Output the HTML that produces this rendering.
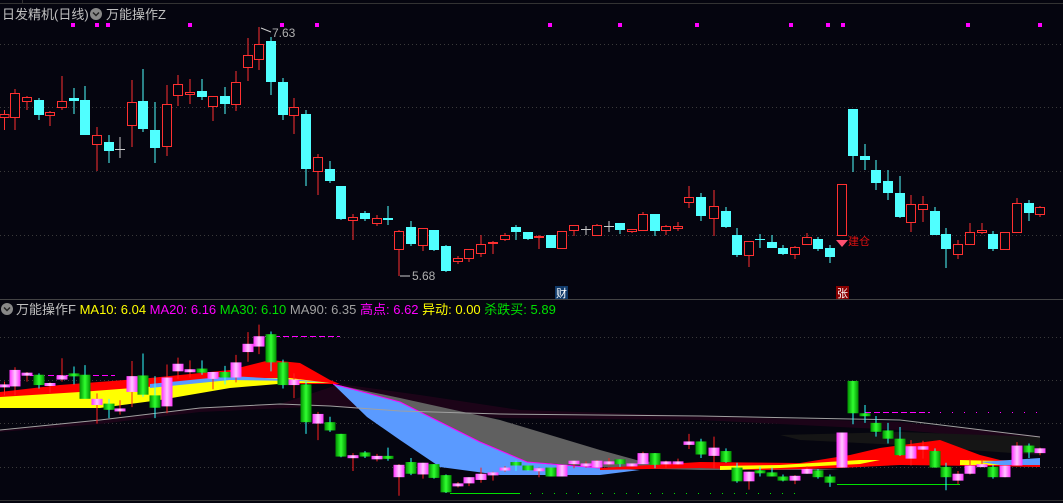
<!DOCTYPE html>
<html><head><meta charset="utf-8"><style>
html,body{margin:0;padding:0;background:#05050f;width:1063px;height:503px;overflow:hidden}
svg{display:block}
text{font-family:"Liberation Sans","Noto Sans CJK SC",sans-serif}
</style></head><body>
<svg id="s" width="1063" height="503" xmlns="http://www.w3.org/2000/svg">
<defs>
<linearGradient id="pk" x1="0" x2="1"><stop offset="0" stop-color="#ff30ff"/><stop offset="0.5" stop-color="#ffc8ff"/><stop offset="1" stop-color="#ff30ff"/></linearGradient>
<linearGradient id="gr" x1="0" x2="1"><stop offset="0" stop-color="#009000"/><stop offset="0.5" stop-color="#30ff30"/><stop offset="1" stop-color="#009000"/></linearGradient>
</defs>
<rect width="1063" height="503" fill="#05050f"/>
<line x1="0" y1="3.5" x2="1063" y2="3.5" stroke="#333"/>
<line x1="22.5" y1="0" x2="22.5" y2="4" stroke="#333"/>
<g stroke="#3a3a3a" stroke-dasharray="1,3">
<line x1="0" y1="44.5" x2="1063" y2="44.5"/><line x1="0" y1="107.5" x2="1063" y2="107.5"/>
<line x1="0" y1="171.5" x2="1063" y2="171.5"/><line x1="0" y1="235.5" x2="1063" y2="235.5"/>
<line x1="0" y1="337.5" x2="1063" y2="337.5"/><line x1="0" y1="380.5" x2="1063" y2="380.5"/>
<line x1="0" y1="423.5" x2="1063" y2="423.5"/><line x1="0" y1="467.5" x2="1063" y2="467.5"/>
</g>
<line x1="0" y1="299.5" x2="1063" y2="299.5" stroke="#444"/>
<line x1="0" y1="500.5" x2="1063" y2="500.5" stroke="#333"/>
<text x="2" y="19" font-size="13" fill="#c0c0c0">日发精机(日线)</text>
<circle cx="96" cy="14" r="6" fill="#888"/><path d="M93 12.5l3 3 3-3" stroke="#222" stroke-width="1.5" fill="none"/>
<text x="106" y="19" font-size="13" fill="#c0c0c0">万能操作Z</text>
<circle cx="7" cy="309" r="6" fill="#888"/><path d="M4 307.5l3 3 3-3" stroke="#222" stroke-width="1.5" fill="none"/>
<text y="314" font-size="13"><tspan x="16" fill="#c0c0c0">万能操作F </tspan><tspan fill="#ffff00">MA10: 6.04 </tspan><tspan fill="#ff00ff">MA20: 6.16 </tspan><tspan fill="#00e000">MA30: 6.10 </tspan><tspan fill="#a0a0a0">MA90: 6.35 </tspan><tspan fill="#ff00ff">高点: 6.62 </tspan><tspan fill="#ffff00">异动: 0.00 </tspan><tspan fill="#00e000">杀跌买: 5.89</tspan></text>
<!-- bands -->
<path d="M0,430 L100,420 L200,408 L280,404 L340,384 L420,395 L520,410 L700,416 L900,422 L1040,436 L1040,442 L900,430 L700,420 L500,418 L400,414 L330,406 L200,412 L100,424 L0,432Z" fill="#1c0418"/>
<path d="M0,392 L60,385 L150,378 L230,370 L270,360 L300,363 L330,380 L340,384 L300,384 L250,384 L180,390 L100,400 L0,405Z" fill="#ff0000"/>
<path d="M0,397 L80,392 L160,386 L230,378 L290,378 L330,383 L290,383 L230,388 L160,400 L100,408 L0,408Z" fill="#ffff00"/>
<path d="M150,384 L230,376 L300,380 L330,383 L300,381 L230,380 L150,388Z" fill="#5a9aff"/>
<path d="M333,384 L400,398 L500,420 L600,450 L640,461 L700,466 L800,468 L840,470 L800,470 L700,470 L620,468 L527,462 L480,442 L400,402Z" fill="#606060"/>
<path d="M333,384 L400,402 L480,442 L527,462 L600,468 L640,470 L600,475 L500,475 L440,467 L400,440 L367,417Z" fill="#5a9aff"/>
<path d="M333,384 L400,402 L480,442 L527,462 L600,468" stroke="#ff00ff" fill="none"/>
<path d="M900,432 L1040,437 L1040,455 L900,445 L800,440 L780,435Z" fill="#151515"/>
<path d="M600,468 L700,462 L800,463 L850,455 L880,448 L940,440 L980,455 L1000,460 L1040,462 L1040,467 L980,466 L900,465 L840,468 L760,470 L700,468 L600,470Z" fill="#ff0000"/>
<path d="M720,466 L780,465 L860,460 L880,460 L860,464 L780,468 L720,470Z" fill="#ffff00"/>
<path d="M960,460 L1040,462 L1040,465 L960,465Z" fill="#ffff00"/>
<path d="M980,462 L1040,458 L1040,465 L1000,465Z" fill="#5a9aff"/>
<polyline points="0,430 100,420 200,408 280,404 330,406 400,411 500,414 700,416 900,420 1040,437" stroke="#a0a0a0" fill="none"/>
<g stroke="#ff00ff" stroke-dasharray="6,3"><line x1="265" y1="336.5" x2="340" y2="336.5"/><line x1="865" y1="412.5" x2="930" y2="412.5"/><line x1="940" y1="412.5" x2="1040" y2="412.5" stroke-dasharray="1,11"/><line x1="30" y1="375.5" x2="115" y2="375.5"/></g>
<g stroke="#00e000"><line x1="450" y1="493.5" x2="520" y2="493.5"/><line x1="837" y1="484.5" x2="960" y2="484.5"/><line x1="530" y1="493.5" x2="800" y2="493.5" stroke-dasharray="1,11"/></g>
<g id="c"></g>
<g fill="#ff00ff"><rect x="71" y="23" width="4" height="4"/><rect x="95" y="23" width="4" height="4"/><rect x="106" y="23" width="4" height="4"/><rect x="188" y="23" width="4" height="4"/><rect x="280" y="23" width="4" height="4"/><rect x="315" y="23" width="4" height="4"/><rect x="548" y="23" width="4" height="4"/><rect x="618" y="23" width="4" height="4"/><rect x="695" y="23" width="4" height="4"/><rect x="789" y="23" width="4" height="4"/><rect x="826" y="23" width="4" height="4"/><rect x="841" y="23" width="4" height="4"/><rect x="966" y="23" width="4" height="4"/><rect x="1038" y="23" width="4" height="4"/></g>
<text x="272" y="37" font-size="12" fill="#b0b0b0">7.63</text><path d="M261 28l10 4" stroke="#ccc"/>
<text x="412" y="280" font-size="12" fill="#b0b0b0">5.68</text><path d="M400 276h10" stroke="#ccc"/>
<text x="848" y="245" font-size="11" fill="#e01010">建仓</text><path d="M836 240h12l-6 7z" fill="#ff5070"/>
<rect x="555" y="286" width="13" height="13" fill="#103a6a"/><text x="556" y="297" font-size="11" fill="#fff">财</text>
<rect x="836" y="286" width="13" height="13" fill="#800"/><text x="837" y="297" font-size="11" fill="#fff">张</text>
</svg>
<script>
var D=[[4.5,110,114,117,130,'r'],[15,89,93,117,130,'r'],[27,96,97,101,110,'r'],[39,98,100,115,120,'c'],[50,111,112,115,126,'r'],[62,76,101,107,110,'r'],[74,88,98,101,114,'c'],[85,86,100,135,135,'c'],[97,127,135,144,171,'r'],[109,135,142,151,163,'c'],[120,137,149,149,158,'w'],[132,80,102,125,147,'r'],[143,69,101,129,132,'c'],[155,102,130,148,163,'c'],[167,85,104,146,156,'r'],[178,75,84,95,106,'r'],[190,79,92,94,104,'r'],[202,79,91,97,100,'c'],[213,99,96,106,121,'r'],[225,87,96,104,114,'c'],[236,71,82,104,111,'r'],[248,38,55,67,81,'r'],[259,27,44,59,70,'r'],[271,37,41,82,95,'c'],[283,78,82,115,120,'c'],[294,98,107,115,134,'r'],[306,110,114,169,186,'c'],[318,154,157,171,195,'r'],[330,161,169,181,183,'c'],[341,186,186,219,220,'c'],[353,214,217,220,240,'r'],[365,211,213,219,221,'c'],[377,215,218,223,226,'r'],[388,206,218,220,225,'c'],[399,230,231,249,276,'r'],[411,221,227,244,246,'c'],[423,228,228,245,251,'r'],[434,230,230,250,251,'c'],[446,245,246,271,272,'c'],[458,256,258,261,264,'r'],[469,249,249,258,262,'r'],[481,235,244,253,257,'r'],[493,241,242,243,254,'r'],[505,233,235,239,241,'r'],[516,225,227,232,240,'c'],[528,232,232,239,240,'c'],[539,235,236,237,249,'r'],[551,235,235,248,248,'c'],[562,231,231,248,248,'r'],[574,225,225,230,236,'r'],[586,226,229,229,235,'w'],[597,224,225,235,235,'r'],[609,221,226,226,232,'w'],[620,223,223,230,234,'c'],[632,229,229,231,233,'r'],[643,212,214,230,230,'r'],[655,214,214,231,236,'c'],[666,225,226,230,235,'r'],[678,222,226,228,231,'r'],[689,186,197,202,208,'r'],[701,193,197,216,221,'c'],[714,190,206,218,236,'r'],[726,207,211,227,228,'c'],[737,228,235,255,257,'c'],[749,241,241,255,267,'r'],[760,234,239,239,248,'x'],[772,235,242,248,248,'c'],[783,245,248,254,255,'c'],[795,246,247,254,259,'r'],[807,233,237,244,244,'r'],[818,237,239,249,251,'c'],[830,245,248,257,263,'c'],[842,184,184,235,235,'r'],[853,109,109,156,172,'c'],[865,144,156,160,170,'c'],[876,160,170,183,190,'c'],[888,170,181,193,200,'c'],[900,176,193,217,218,'c'],[911,195,204,222,232,'r'],[923,196,204,209,222,'r'],[935,207,211,235,235,'c'],[946,228,234,249,268,'c'],[958,240,244,254,259,'r'],[970,223,232,244,245,'r'],[982,223,230,232,234,'r'],[993,231,234,249,251,'c'],[1005,232,232,249,249,'r'],[1017,198,203,232,232,'r'],[1029,200,203,213,221,'c'],[1040,206,207,214,217,'r']];
var h='',b=function(y){return 306+0.6875*y};
D.forEach(function(d){var x=d[0],H=d[1],T=d[2],B=d[3],L=d[4],t=d[5];
var col=t=='r'?'#ff3030':(t=='w'?'#ccc':'#50ffff');
h+='<line x1="'+x+'" y1="'+H+'" x2="'+x+'" y2="'+L+'" stroke="'+col+'"/>';
if(t=='w'||t=='x'){h+='<line x1="'+(x-5)+'" y1="'+T+'.5" x2="'+(x+5)+'" y2="'+T+'.5" stroke="'+col+'"/>';}
else if(t=='r'){h+='<rect x="'+(x-4.5)+'" y="'+(T+0.5)+'" width="9" height="'+Math.max(B-T,1)+'" fill="#05050f" stroke="#ff3030"/>';}
else h+='<rect x="'+(x-5)+'" y="'+T+'" width="10" height="'+Math.max(B-T,2)+'" fill="#50ffff"/>';
var up=(t=='r'||t=='w');
h+='<line x1="'+x+'" y1="'+b(H)+'" x2="'+x+'" y2="'+b(L)+'" stroke="'+(up?'#ff2020':'#30ffff')+'"/>';
h+='<rect x="'+(x-5.5)+'" y="'+b(T)+'" width="11" height="'+Math.max(b(B)-b(T),3)+'" fill="url(#'+(up?'pk':'gr')+')"/>';
});
document.getElementById('c').innerHTML=h;
</script>
</body></html>
